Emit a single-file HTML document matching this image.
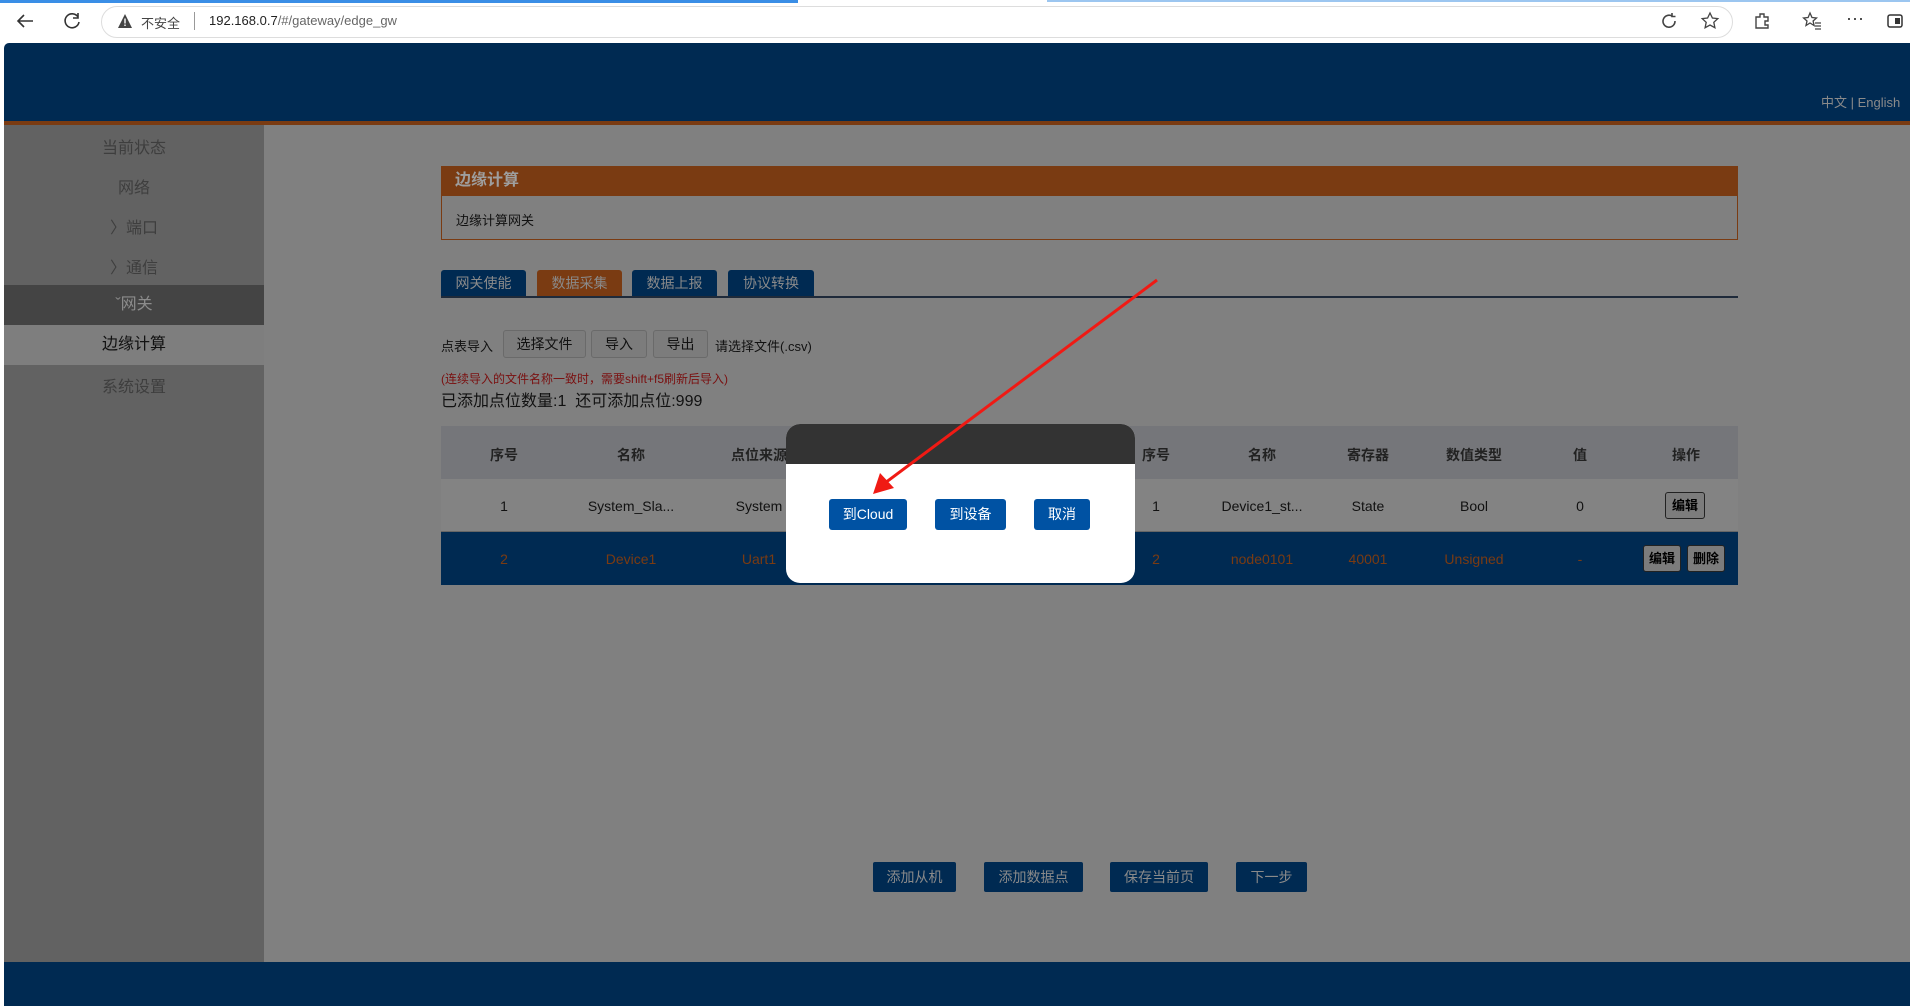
<!DOCTYPE html>
<html><head><meta charset="utf-8"><style>
*{margin:0;padding:0;box-sizing:border-box}
body{width:1910px;height:1006px;overflow:hidden;background:#fff;font-family:"Liberation Sans","Noto Sans CJK SC",sans-serif;position:relative}
.a{position:absolute}
.c{text-align:center}
.sb div{position:absolute;left:0;width:260px;text-align:center;font-size:16px;color:#3e3e3e}
.tab{position:absolute;top:270px;height:27px;line-height:27px;text-align:center;font-size:14px;color:#8a8a8a;background:#002a52;border-radius:3px 3px 0 0}
.gb{position:absolute;top:330px;height:28px;line-height:26px;text-align:center;font-size:14px;color:#111;background:#7c7c7c;border:1px solid #6a6a6a;border-radius:3px}
.cell{position:absolute;width:120px;margin-left:-60px;text-align:center;font-size:14px}
.mb{position:absolute;top:499px;height:31px;line-height:31px;text-align:center;color:#fff;font-size:14px;background:#0052a3;border-radius:3px}
.bb{position:absolute;top:862px;height:30px;line-height:30px;text-align:center;color:#8a8a8a;font-size:14px;background:#002a52;border-radius:2px}
</style></head><body>
<div class="a" style="left:0;top:0;width:798px;height:3px;background:#3a8ee6"></div>
<div class="a" style="left:1047px;top:0;width:863px;height:2px;background:#9cc6f0"></div>
<svg class="a" style="left:14px;top:10px" width="22" height="22" viewBox="0 0 22 22"><path d="M19 11H4M10 5l-6 6 6 6" fill="none" stroke="#333" stroke-width="1.6"/></svg>
<svg class="a" style="left:61px;top:10px" width="22" height="22" viewBox="0 0 22 22"><path d="M17 7A7 7 0 1 0 18 12M17 3v5h-5" fill="none" stroke="#333" stroke-width="1.6"/></svg>
<div class="a" style="left:101px;top:6px;width:1632px;height:32px;border:1px solid #ddd;border-radius:16px;background:#fff"></div>
<svg class="a" style="left:117px;top:13px" width="16" height="16" viewBox="0 0 16 16"><path d="M8 1L15 15H1Z" fill="#444"/><rect x="7.3" y="5.5" width="1.4" height="5" fill="#fff"/><rect x="7.3" y="11.5" width="1.4" height="1.5" fill="#fff"/></svg>
<div class="a" style="left:141px;top:13px;font-size:13px;color:#444">不安全</div>
<div class="a" style="left:194px;top:12px;width:1px;height:18px;background:#999"></div>
<div class="a" style="left:209px;top:13px;font-size:13px;color:#222">192.168.0.7<span style="color:#666">/#/gateway/edge_gw</span></div>
<svg class="a" style="left:1660px;top:12px" width="18" height="18" viewBox="0 0 18 18"><path d="M15 9A6 6 0 1 1 12 4M12 1v3.5h3.5" fill="none" stroke="#444" stroke-width="1.6"/></svg>
<svg class="a" style="left:1700px;top:11px" width="20" height="20" viewBox="0 0 20 20"><path d="M10 2l2.4 5 5.4.6-4 3.7 1.1 5.4L10 14l-4.9 2.7 1.1-5.4-4-3.7 5.4-.6z" fill="none" stroke="#444" stroke-width="1.3"/></svg>
<svg class="a" style="left:1752px;top:11px" width="20" height="20" viewBox="0 0 20 20"><path d="M4 6h4V3h4v3h4v4h-3v4h3v3H4z" fill="none" stroke="#444" stroke-width="1.4"/></svg>
<svg class="a" style="left:1802px;top:11px" width="20" height="20" viewBox="0 0 20 20"><path d="M8 2l2 4.5 4.5.5-3.4 3 1 4.5L8 12l-4 2.5 1-4.5L1.6 7l4.5-.5z" fill="none" stroke="#444" stroke-width="1.3"/><path d="M13 12h6M13 15h6M13 18h6" stroke="#444" stroke-width="1.3"/></svg>
<div class="a" style="left:1846px;top:8px;font-size:18px;color:#333">···</div>
<svg class="a" style="left:1886px;top:12px" width="18" height="18" viewBox="0 0 18 18"><rect x="2" y="3" width="14" height="12" rx="2" fill="none" stroke="#333" stroke-width="1.5"/><rect x="9" y="6" width="5" height="6" fill="#333"/></svg>
<div class="a" style="left:4px;top:43px;width:1906px;height:78px;background:#002a52;border-radius:5px 0 0 0"></div>
<div class="a" style="left:4px;top:121px;width:1906px;height:4px;background:#7a3b12"></div>
<div class="a" style="left:1821px;top:92px;font-size:13px;color:#8a8a8a">中文 | English</div>
<div class="a" style="left:4px;top:125px;width:1906px;height:837px;background:#808080"></div>
<div class="a" style="left:4px;top:962px;width:1906px;height:44px;background:#002a52"></div>
<div class="a sb" style="left:4px;top:125px;width:260px;height:837px;background:#626262">
<div style="top:9px">当前状态</div>
<div style="top:49px">网络</div>
<div style="top:89px">〉端口</div>
<div style="top:129px">〉通信</div>
<div style="top:160px;height:40px;line-height:40px;background:#444;color:#8c8c8c">ˇ网关</div>
<div style="top:200px;height:40px;line-height:40px;background:#7e7e7e;color:#111">边缘计算</div>
<div style="top:248px">系统设置</div>
</div>
<div class="a" style="left:441px;top:166px;width:1297px;height:74px;border:1px solid #7a3b12"></div>
<div class="a" style="left:441px;top:166px;width:1297px;height:30px;background:#7a3b12;color:#9e9e9e;font-size:16px;font-weight:bold;line-height:30px;padding-left:14px">边缘计算</div>
<div class="a" style="left:456px;top:210px;font-size:13px;color:#111">边缘计算网关</div>
<div class="tab" style="left:441px;width:85px">网关使能</div>
<div class="tab" style="left:537px;width:85px;background:#7a3b12">数据采集</div>
<div class="tab" style="left:632px;width:85px">数据上报</div>
<div class="tab" style="left:728px;width:86px">协议转换</div>
<div class="a" style="left:441px;top:296px;width:1297px;height:2px;background:#1e2a3a"></div>
<div class="a" style="left:441px;top:336px;font-size:13px;color:#111">点表导入</div>
<div class="gb" style="left:503px;width:83px">选择文件</div>
<div class="gb" style="left:591px;width:56px">导入</div>
<div class="gb" style="left:653px;width:55px">导出</div>
<div class="a" style="left:715px;top:336px;font-size:13px;color:#111">请选择文件(.csv)</div>
<div class="a" style="left:441px;top:370px;font-size:12px;color:#7a1010">(连续导入的文件名称一致时，需要shift+f5刷新后导入)</div>
<div class="a" style="left:441px;top:387px;font-size:16px;color:#111">已添加点位数量:1&nbsp; 还可添加点位:999</div>
<div class="a" style="left:441px;top:426px;width:1297px;height:53px;background:#75767a"></div>
<div class="a" style="left:441px;top:479px;width:1297px;height:53px;background:#838383;border-bottom:1px solid #666"></div>
<div class="a" style="left:441px;top:532px;width:1297px;height:53px;background:#002a52"></div>
<div style="font-weight:bold;color:#222">
<div class="cell" style="left:504px;top:445px">序号</div><div class="cell" style="left:631px;top:445px">名称</div><div class="cell" style="left:759px;top:445px">点位来源</div>
<div class="cell" style="left:1156px;top:445px">序号</div><div class="cell" style="left:1262px;top:445px">名称</div><div class="cell" style="left:1368px;top:445px">寄存器</div><div class="cell" style="left:1474px;top:445px">数值类型</div><div class="cell" style="left:1580px;top:445px">值</div><div class="cell" style="left:1686px;top:445px">操作</div>
</div>
<div style="color:#111">
<div class="cell" style="left:504px;top:498px">1</div><div class="cell" style="left:631px;top:498px">System_Sla...</div><div class="cell" style="left:759px;top:498px">System</div>
<div class="cell" style="left:1156px;top:498px">1</div><div class="cell" style="left:1262px;top:498px">Device1_st...</div><div class="cell" style="left:1368px;top:498px">State</div><div class="cell" style="left:1474px;top:498px">Bool</div><div class="cell" style="left:1580px;top:498px">0</div>
</div>
<div style="color:#7a3b12">
<div class="cell" style="left:504px;top:551px">2</div><div class="cell" style="left:631px;top:551px">Device1</div><div class="cell" style="left:759px;top:551px">Uart1</div>
<div class="cell" style="left:1156px;top:551px">2</div><div class="cell" style="left:1262px;top:551px">node0101</div><div class="cell" style="left:1368px;top:551px">40001</div><div class="cell" style="left:1474px;top:551px">Unsigned</div><div class="cell" style="left:1580px;top:551px">-</div>
</div>
<div class="a c" style="left:1665px;top:492px;width:40px;height:27px;line-height:25px;border:1px solid #222;border-radius:3px;background:#7c7c7c;font-size:13px;font-weight:bold">编辑</div>
<div class="a c" style="left:1643px;top:545px;width:38px;height:27px;line-height:25px;border:1px solid #222;border-radius:3px;background:#7c7c7c;font-size:13px;font-weight:bold">编辑</div>
<div class="a c" style="left:1687px;top:545px;width:38px;height:27px;line-height:25px;border:1px solid #222;border-radius:3px;background:#7c7c7c;font-size:13px;font-weight:bold">删除</div>
<div class="a" style="left:786px;top:424px;width:349px;height:159px;background:#fff;border-radius:14px;overflow:hidden"><div style="height:40px;background:#333"></div></div>
<div class="mb" style="left:829px;width:78px">到Cloud</div>
<div class="mb" style="left:935px;width:71px">到设备</div>
<div class="mb" style="left:1034px;width:56px">取消</div>
<div class="bb" style="left:873px;width:83px">添加从机</div>
<div class="bb" style="left:984px;width:99px">添加数据点</div>
<div class="bb" style="left:1110px;width:98px">保存当前页</div>
<div class="bb" style="left:1236px;width:71px">下一步</div>
<svg class="a" style="left:0;top:0" width="1910" height="1006"><line x1="1157" y1="280" x2="885" y2="483" stroke="#f01a14" stroke-width="3"/><path d="M873 494L880 473L894 488Z" fill="#f01a14"/></svg>
</body></html>
